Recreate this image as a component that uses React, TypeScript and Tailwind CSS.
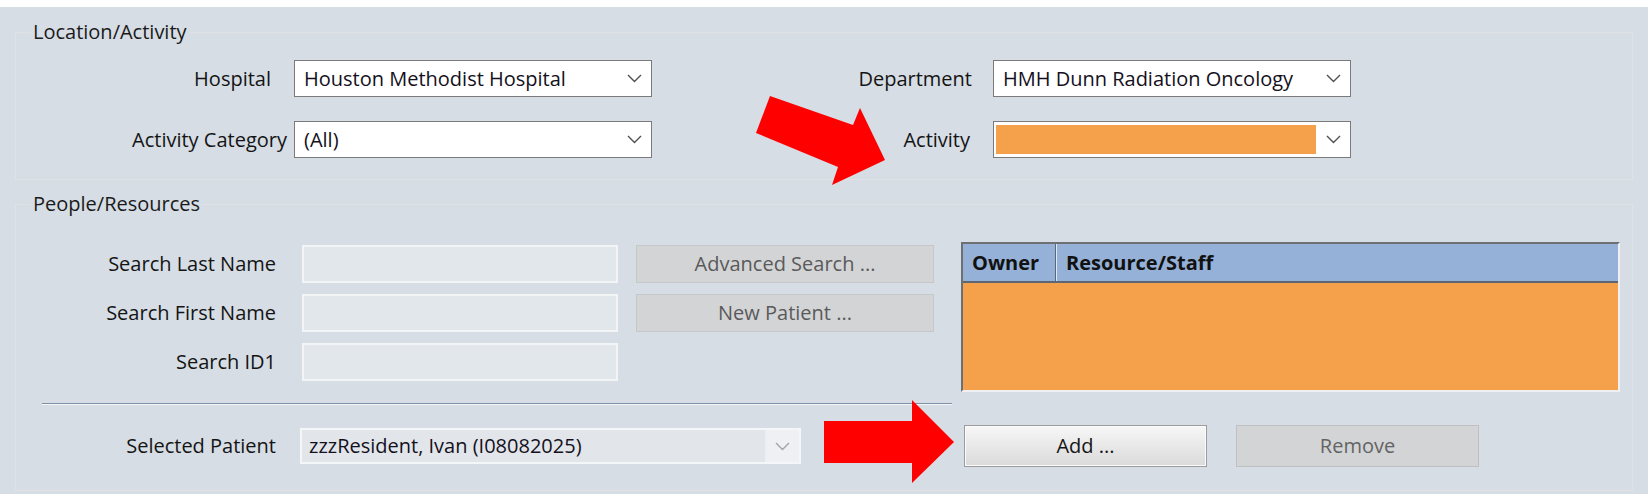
import React from "react";

function Chevron({ color = "#505050" }: { color?: string }) {
  return (
    <svg width="15" height="9" viewBox="0 0 15 9" className="shrink-0">
      <polyline points="1,1 7.5,7.5 14,1" fill="none" stroke={color} strokeWidth="1.4" />
    </svg>
  );
}

function Select({ text, orange = false }: { text?: string; orange?: boolean }) {
  return (
    <div className="w-[358px] h-[37px] bg-white border border-[#7a7a7a] flex items-center shrink-0">
      {orange ? (
        <div className="ml-[2px] h-[29px] w-[320px] bg-[#f5a04b]" />
      ) : (
        <div className="pl-[9px] flex-1 text-[#141020] whitespace-nowrap">{text}</div>
      )}
      <div className="ml-auto mr-[9px]">
        <Chevron />
      </div>
    </div>
  );
}

function DisabledInput() {
  return <div className="w-[316px] h-[38px] bg-[#e2e7ec] border-2 border-[#f3f4f6] shrink-0" />;
}

function DisabledButton({ label }: { label: string }) {
  return (
    <div className="w-[298px] h-[38px] bg-[#d3d4d6] border border-[#c5c7ca] flex items-center justify-center text-[#5a5a5a] shrink-0">
      {label}
    </div>
  );
}

const label = "text-right font-medium text-[#141414] whitespace-nowrap";

export default function App() {
  return (
    <div className="relative w-[1648px] h-[494px] overflow-hidden bg-[#d6dde5] font-['Open_Sans',sans-serif] text-[20px] leading-[24px] text-[#1a1a1a]">
      <div className="h-[7px] bg-white" />

      {/* Location / Activity */}
      <fieldset className="mx-[15px] mt-[13px] border border-[#dfe1e4] pt-[16px] pb-[21px] min-w-0">
        <legend className="ml-[15px] px-[2px] leading-[24px]">Location/Activity</legend>
        <div className="flex flex-col gap-[24px]">
          <div className="flex items-center">
            <div className={`w-[255px] ${label}`}>Hospital</div>
            <div className="ml-[23px]">
              <Select text="Houston Methodist Hospital" />
            </div>
            <div className={`w-[320px] ${label}`}>Department</div>
            <div className="ml-[21px]">
              <Select text="HMH Dunn Radiation Oncology" />
            </div>
          </div>
          <div className="flex items-center">
            <div className={`w-[271px] ${label}`}>Activity Category</div>
            <div className="ml-[7px]">
              <Select text="(All)" />
            </div>
            <div className={`w-[318px] ${label}`}>Activity</div>
            <div className="ml-[23px]">
              <Select orange />
            </div>
          </div>
        </div>
      </fieldset>

      {/* People / Resources */}
      <fieldset className="mx-[15px] mt-[12px] border border-[#dfe1e4] pt-[26px] pb-[23px] min-w-0">
        <legend className="ml-[15px] px-[2px] leading-[24px]">People/Resources</legend>
        <div className="flex items-start">
          <div className="mt-[3px] flex flex-col gap-[11px]">
            <div className="flex items-center">
              <div className={`w-[260px] ${label}`}>Search Last Name</div>
              <div className="ml-[26px]"><DisabledInput /></div>
              <div className="ml-[18px]"><DisabledButton label="Advanced Search ..." /></div>
            </div>
            <div className="flex items-center">
              <div className={`w-[260px] ${label}`}>Search First Name</div>
              <div className="ml-[26px]"><DisabledInput /></div>
              <div className="ml-[18px]"><DisabledButton label="New Patient ..." /></div>
            </div>
            <div className="flex items-center">
              <div className={`w-[260px] ${label}`}>Search ID1</div>
              <div className="ml-[26px]"><DisabledInput /></div>
            </div>
          </div>

          <div className="ml-[27px] w-[659px] h-[150px] flex flex-col border-2 border-t-[#6d6f73] border-l-[#6d6f73] border-r-[#eef0f3] border-b-[#eef0f3]">
            <div className="h-[39px] flex bg-[#95b1d7] border-b-2 border-[#5d6773] font-bold text-[#111]">
              <div className="w-[93px] flex items-center pl-[9px] border-r border-[#5d6773] shadow-[1px_0_0_#dfe8f4]">Owner</div>
              <div className="flex-1 flex items-center pl-[10px]">Resource/Staff</div>
            </div>
            <div className="flex-1 bg-[#f5a04b]" />
          </div>
        </div>

        <div className="ml-[26px] mt-[11px] w-[910px] h-[2px] border-t border-[#7e90a6] border-b border-b-[#f4f6f8]" />

        <div className="mt-[20px] flex items-center">
          <div className={`w-[260px] ${label}`}>Selected Patient</div>
          <div className="ml-[24px] w-[501px] h-[36px] border-2 border-[#f5f6f8] flex">
            <div className="flex-1 bg-[#e2e6eb] flex items-center pl-[7px] text-[#141020] whitespace-nowrap">zzzResident, Ivan (I08082025)</div>
            <div className="w-[34px] bg-[#eef0f3] flex items-center justify-center">
              <Chevron color="#a3a3a3" />
            </div>
          </div>
          <div className="ml-[163px] w-[243px] h-[42px] border border-[#9c9c9c] bg-gradient-to-b from-[#f7f7f7] to-[#dadada] shadow-[inset_0_0_0_1px_#fbfbfb] flex items-center justify-center font-medium text-[#151515]">
            Add ...
          </div>
          <div className="ml-[29px] w-[243px] h-[42px] border border-[#bfc0c2] bg-[#d3d4d6] flex items-center justify-center text-[#636363]">
            Remove
          </div>
        </div>
      </fieldset>

      {/* Annotation arrows */}
      <svg className="absolute left-0 top-0 pointer-events-none" width="1648" height="494" viewBox="0 0 1648 494">
        <polygon points="770,96 853,125 860,108 885,160 832,185 838,167 756,133" fill="#ff0000" />
        <polygon points="824,421 912,421 912,400 954,442 912,483 912,463 824,463" fill="#ff0000" />
      </svg>
    </div>
  );
}
